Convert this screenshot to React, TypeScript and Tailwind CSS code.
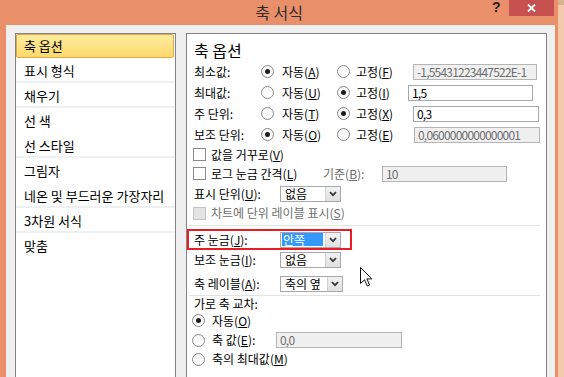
import React from "react";

const Radio = ({ checked = false }: { checked?: boolean }) => (
  <span className="w-[13px] h-[13px] rounded-full border border-[#8a8a8a] bg-gradient-to-b from-[#f4f4f4] to-white flex items-center justify-center shrink-0">
    {checked && <span className="w-[5px] h-[5px] rounded-full bg-[#1e1e1e]" />}
  </span>
);

const Check = ({ disabled = false }: { disabled?: boolean }) => (
  <span
    className={
      disabled
        ? "w-[13px] h-[13px] border border-[#c4c4c4] bg-[#e4e4e4] shrink-0"
        : "w-[13px] h-[13px] border border-[#8a8a8a] bg-white shrink-0"
    }
  />
);

const Input = ({
  value,
  disabled = false,
  w,
}: {
  value: string;
  disabled?: boolean;
  w: string;
}) => (
  <div
    className={`${w} h-[16px] border shrink-0 overflow-hidden whitespace-nowrap pl-[3px] leading-[14px] text-[12px] tracking-[-0.8px] ${
      disabled
        ? "border-[#b5b5b5] bg-[#f0f0f0] text-[#6d6d6d]"
        : "border-[#a5a8ae] bg-white text-black"
    }`}
  >
    {value}
  </div>
);

const Chevron = () => (
  <svg width="8" height="6" viewBox="0 0 8 6">
    <path d="M1 1.2 L4 4.2 L7 1.2" fill="none" stroke="#3a3a3a" strokeWidth="1.8" />
  </svg>
);

const Select = ({
  value,
  highlight = false,
  w = "w-[61px]",
}: {
  value: string;
  highlight?: boolean;
  w?: string;
}) => (
  <div className={`${w} h-[16px] border border-[#a5a8ae] bg-white flex shrink-0`}>
    <div className="flex-1 flex items-center whitespace-nowrap pl-[1px]">
      {highlight ? (
        <span className="bg-[#3399ff] text-white h-[13px] leading-[13px] w-[41px] pl-[1px]">{value}</span>
      ) : (
        <span className="pl-[3px] leading-[14px]">{value}</span>
      )}
    </div>
    <div className="w-[15px] h-full border-l border-[#d0d0d0] bg-gradient-to-b from-[#f2f2f2] to-[#e0e0e0] flex items-center justify-center">
      <Chevron />
    </div>
  </div>
);

const leftItems: { t: string; sel?: boolean; sep?: boolean }[] = [
  { t: "축 옵션", sel: true },
  { t: "표시 형식", sep: true },
  { t: "채우기", sep: true },
  { t: "선 색" },
  { t: "선 스타일", sep: true },
  { t: "그림자" },
  { t: "네온 및 부드러운 가장자리", sep: true },
  { t: "3차원 서식", sep: true },
  { t: "맞춤" },
];

export default function App() {
  return (
    <div className="w-[564px] h-[377px] overflow-hidden bg-[#e9906a] flex relative text-[12px] text-black font-['Noto_Sans_CJK_KR','Noto_Sans',sans-serif]">
      {/* window */}
      <div className="w-[558px] flex flex-col shrink-0">
        {/* title bar */}
        <div className="h-[25px] relative flex items-center justify-center shrink-0">
          <span className="text-[16px] leading-[20px] text-[#2e2e2e] -mt-[2px]">축 서식</span>
          <span className="absolute left-[492px] top-[-1px] text-[14px] font-bold leading-[16px] text-[#222] font-['Liberation_Sans',sans-serif]">
            ?
          </span>
          <div className="absolute right-[4px] top-0 w-[45px] h-[16px] bg-[#c75050] flex items-center justify-center">
            <svg width="9" height="8" viewBox="0 0 9 8">
              <path d="M1 0.5 L8 7.5 M8 0.5 L1 7.5" stroke="white" strokeWidth="1.8" />
            </svg>
          </div>
        </div>
        {/* body */}
        <div className="flex-1 ml-[6px] mr-[3px] bg-[#f0f0f0] flex items-start pt-[8px] pl-[9px] gap-[10px] overflow-hidden">
          {/* left list */}
          <div className="w-[161px] h-[400px] border border-[#838383] bg-white flex flex-col shrink-0 text-[13px]">
            {leftItems.map((it) =>
              it.sel ? (
                <div
                  key={it.t}
                  className="h-[24px] mr-[1px] border border-[#dcaa48] rounded-[2px] bg-gradient-to-b from-[#ffec9f] to-[#fdd96c] flex items-center pl-[7px] leading-[16px]"
                >
                  {it.t}
                </div>
              ) : (
                <div
                  key={it.t}
                  className={`h-[25px] flex items-center pl-[8px] leading-[16px] ${
                    it.sep ? "shadow-[inset_0_-2px_0_#eef0f2]" : ""
                  }`}
                >
                  {it.t}
                </div>
              )
            )}
          </div>
          {/* right panel */}
          <div className="w-[361px] h-[400px] border border-[#838383] bg-white flex flex-col pl-[7px] shrink-0 leading-[16px]">
            <div className="h-[27px] pt-[6px] text-[16px] leading-[20px] shrink-0">축 옵션</div>

            <div className="flex items-center h-[21px] shrink-0">
              <span className="w-[67px]">최소값:</span>
              <div className="flex items-center w-[76px]">
                <Radio checked />
                <span className="ml-[8px]">
                  자동(<u>A</u>)
                </span>
              </div>
              <div className="flex items-center w-[76px]">
                <Radio />
                <span className="ml-[6px]">
                  고정(<u>F</u>)
                </span>
              </div>
              <Input value="-1,55431223447522E-1" disabled w="w-[124px]" />
            </div>

            <div className="flex items-center h-[21px] shrink-0">
              <span className="w-[67px]">최대값:</span>
              <div className="flex items-center w-[76px]">
                <Radio />
                <span className="ml-[8px]">
                  자동(<u>U</u>)
                </span>
              </div>
              <div className="flex items-center w-[71px]">
                <Radio checked />
                <span className="ml-[6px]">
                  고정(<u>I</u>)
                </span>
              </div>
              <Input value="1,5" w="w-[125px]" />
            </div>

            <div className="flex items-center h-[21px] shrink-0">
              <span className="w-[67px]">주 단위:</span>
              <div className="flex items-center w-[76px]">
                <Radio />
                <span className="ml-[8px]">
                  자동(<u>T</u>)
                </span>
              </div>
              <div className="flex items-center w-[76px]">
                <Radio checked />
                <span className="ml-[6px]">
                  고정(<u>X</u>)
                </span>
              </div>
              <Input value="0,3" w="w-[126px]" />
            </div>

            <div className="flex items-center h-[21px] shrink-0">
              <span className="w-[67px]">보조 단위:</span>
              <div className="flex items-center w-[76px]">
                <Radio checked />
                <span className="ml-[8px]">
                  자동(<u>O</u>)
                </span>
              </div>
              <div className="flex items-center w-[77px]">
                <Radio />
                <span className="ml-[6px]">
                  고정(<u>E</u>)
                </span>
              </div>
              <Input value="0,0600000000000001" disabled w="w-[126px]" />
            </div>

            <div className="flex items-center h-[19px] shrink-0 -ml-[1px]">
              <Check />
              <span className="ml-[5px]">
                값을 거꾸로(<u>V</u>)
              </span>
            </div>

            <div className="flex items-center h-[19px] shrink-0 -ml-[1px]">
              <div className="flex items-center w-[130px]">
                <Check />
                <span className="ml-[5px]">
                  로그 눈금 간격(<u>L</u>)
                </span>
              </div>
              <span className="w-[59px] text-[#6d6d6d]">
                기준(<u>B</u>):
              </span>
              <Input value="10" disabled w="w-[125px]" />
            </div>

            <div className="flex items-center h-[22px] shrink-0">
              <span className="w-[86px]">
                표시 단위(<u>U</u>):
              </span>
              <Select value="없음" />
            </div>

            <div className="flex items-center h-[16px] shrink-0 -ml-[1px] text-[#6d6d6d]">
              <Check disabled />
              <span className="ml-[5px]">
                차트에 단위 레이블 표시(<u>S</u>)
              </span>
            </div>

            <div className="mt-[4px] -ml-[5px] w-[351px] h-px bg-[#e2e2e2] shrink-0" />

            <div className="mt-[3px] -ml-[7px] w-[165px] h-[21px] border-2 border-[#ec1c24] flex items-center pl-[5px] shrink-0">
              <span className="w-[86px]">
                주 눈금(<u>J</u>):
              </span>
              <Select value="안쪽" highlight />
            </div>

            <div className="flex items-center h-[20px] shrink-0">
              <span className="w-[86px]">
                보조 눈금(<u>I</u>):
              </span>
              <Select value="없음" />
            </div>

            <div className="mt-[4px] flex items-center h-[20px] shrink-0">
              <span className="w-[86px]">
                축 레이블(<u>A</u>):
              </span>
              <Select value="축의 옆" w="w-[63px]" />
            </div>

            <div className="mt-[1px] -ml-[5px] w-[351px] h-px bg-[#e2e2e2] shrink-0" />

            <div className="flex items-center h-[15px] shrink-0">가로 축 교차:</div>

            <div className="flex items-center h-[19px] shrink-0 -ml-[2px]">
              <Radio checked />
              <span className="ml-[7px]">
                자동(<u>O</u>)
              </span>
            </div>

            <div className="flex items-center h-[20px] shrink-0 -ml-[2px]">
              <div className="flex items-center w-[84px]">
                <Radio />
                <span className="ml-[7px]">
                  축 값(<u>E</u>):
                </span>
              </div>
              <Input value="0,0" disabled w="w-[126px]" />
            </div>

            <div className="flex items-center h-[18px] shrink-0 -ml-[2px]">
              <Radio />
              <span className="ml-[7px]">
                축의 최대값(<u>M</u>)
              </span>
            </div>
          </div>
        </div>
      </div>
      {/* right strip (window behind) */}
      <div className="flex-1 flex flex-col">
        <div className="h-[5px] bg-[#d8b48c]" />
        <div className="flex-1 bg-[#f4c8ab]" />
      </div>

      {/* mouse cursor */}
      <svg className="absolute left-[360px] top-[267px]" width="13" height="20" viewBox="0 0 13 20">
        <path
          d="M0.5 0.5 L0.5 16.5 L4.5 12.8 L7.3 19 L9.6 18 L6.9 11.9 L11.8 11.9 Z"
          fill="white"
          stroke="#111"
          strokeWidth="1"
          strokeLinejoin="miter"
        />
      </svg>
    </div>
  );
}
